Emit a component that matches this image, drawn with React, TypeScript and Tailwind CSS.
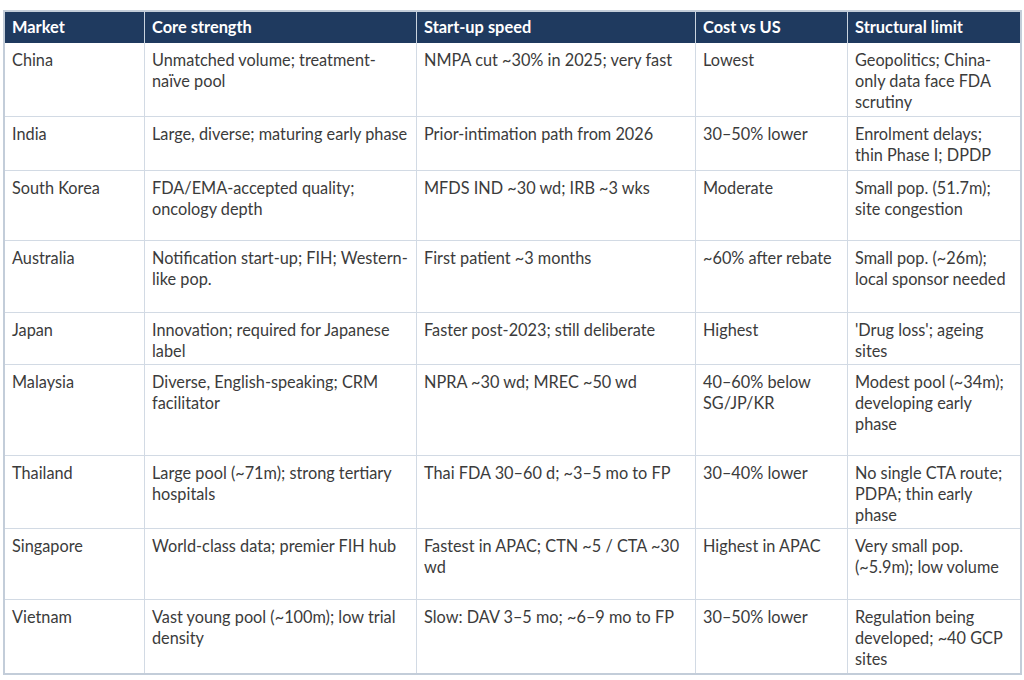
import React from 'react';

type Row = { h: string; cells: string[][] };

const cols = 'grid grid-cols-[140px_272px_279px_152px_174px]';

const rows: Row[] = [
  {
    h: 'h-[73px]',
    cells: [
      ['China'],
      ['Unmatched volume; treatment-', 'naïve pool'],
      ['NMPA cut ~30% in 2025; very fast'],
      ['Lowest'],
      ['Geopolitics; China-', 'only data face FDA', 'scrutiny'],
    ],
  },
  {
    h: 'h-[54px]',
    cells: [
      ['India'],
      ['Large, diverse; maturing early phase'],
      ['Prior-intimation path from 2026'],
      ['30–50% lower'],
      ['Enrolment delays;', 'thin Phase I; DPDP'],
    ],
  },
  {
    h: 'h-[70px]',
    cells: [
      ['South Korea'],
      ['FDA/EMA-accepted quality;', 'oncology depth'],
      ['MFDS IND ~30 wd; IRB ~3 wks'],
      ['Moderate'],
      ['Small pop. (51.7m);', 'site congestion'],
    ],
  },
  {
    h: 'h-[72px]',
    cells: [
      ['Australia'],
      ['Notification start-up; FIH; Western-', 'like pop.'],
      ['First patient ~3 months'],
      ['~60% after rebate'],
      ['Small pop. (~26m);', 'local sponsor needed'],
    ],
  },
  {
    h: 'h-[52px]',
    cells: [
      ['Japan'],
      ['Innovation; required for Japanese', 'label'],
      ['Faster post-2023; still deliberate'],
      ['Highest'],
      ["'Drug loss'; ageing", 'sites'],
    ],
  },
  {
    h: 'h-[91px]',
    cells: [
      ['Malaysia'],
      ['Diverse, English-speaking; CRM', 'facilitator'],
      ['NPRA ~30 wd; MREC ~50 wd'],
      ['40–60% below', 'SG/JP/KR'],
      ['Modest pool (~34m);', 'developing early', 'phase'],
    ],
  },
  {
    h: 'h-[73px]',
    cells: [
      ['Thailand'],
      ['Large pool (~71m); strong tertiary', 'hospitals'],
      ['Thai FDA 30–60 d; ~3–5 mo to FP'],
      ['30–40% lower'],
      ['No single CTA route;', 'PDPA; thin early', 'phase'],
    ],
  },
  {
    h: 'h-[71px]',
    cells: [
      ['Singapore'],
      ['World-class data; premier FIH hub'],
      ['Fastest in APAC; CTN ~5 / CTA ~30', 'wd'],
      ['Highest in APAC'],
      ['Very small pop.', '(~5.9m); low volume'],
    ],
  },
  {
    h: 'h-[74px]',
    cells: [
      ['Vietnam'],
      ['Vast young pool (~100m); low trial', 'density'],
      ['Slow: DAV 3–5 mo; ~6–9 mo to FP'],
      ['30–50% lower'],
      ['Regulation being', 'developed; ~40 GCP', 'sites'],
    ],
  },
];

const headers = ['Market', 'Core strength', 'Start-up speed', 'Cost vs US', 'Structural limit'];

export default function App() {
  return (
    <div className="min-h-screen bg-white pt-[10px] pl-[3px] font-['Lato','Open_Sans',sans-serif]">
      <div className="w-[1019px] border-2 border-[#c3cdd9]">
        {/* header */}
        <div className={`${cols} h-[31px] bg-[#1f3a5f] text-white font-bold text-[16.4px]`}>
          {headers.map((t, i) => (
            <div
              key={t}
              className={`flex items-center px-[7px] ${i < 4 ? 'border-r border-[#c9d3de]' : ''}`}
            >
              {t}
            </div>
          ))}
        </div>

        {rows.map((r, ri) => (
          <div
            key={ri}
            className={`${cols} ${r.h} ${ri > 0 ? 'border-t border-[#d2dae4]' : ''} text-[16.3px] leading-[21px] text-[#3b3b3b]`}
          >
            {r.cells.map((lines, ci) => (
              <div
                key={ci}
                className={`px-[7px] pt-[6px] whitespace-nowrap ${ci < 4 ? 'border-r border-[#d2dae4]' : ''}`}
              >
                {lines.map((l, li) => (
                  <div key={li}>{l}</div>
                ))}
              </div>
            ))}
          </div>
        ))}
      </div>
    </div>
  );
}
